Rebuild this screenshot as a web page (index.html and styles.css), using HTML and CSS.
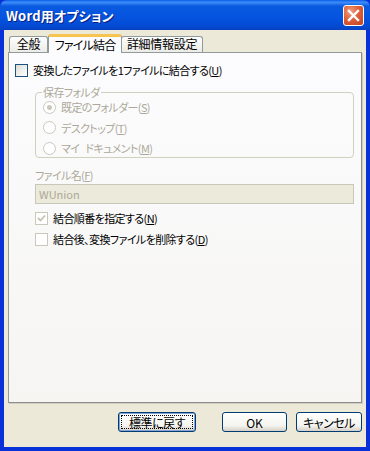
FILE: index.html
```html
<!DOCTYPE html>
<html lang="ja">
<head>
<meta charset="utf-8">
<link rel="stylesheet" href="styles.css">
</head>
<body>
<div class="window">
  <div class="titlebar">
    <span class="title">Word用オプション</span>
    <span class="close"><svg width="13" height="13" viewBox="0 0 13 13"><path d="M2 2 L11 11 M11 2 L2 11" stroke="#fff" stroke-width="2.4" stroke-linecap="square"/></svg></span>
  </div>
  <div class="client">
    <div class="tabs">
      <div class="tab">全般</div>
      <div class="tab active">ファイル結合</div>
      <div class="tab">詳細情報設定</div>
    </div>
    <div class="panel">
      <label class="check main"><span class="box"></span><span>変換したファイルを1ファイルに結合する(<u>U</u>)</span></label>
      <div class="sub">
        <fieldset class="group">
          <legend>保存フォルダ</legend>
          <div class="radio"><span class="dot on"></span><span>既定のフォルダー(<u>S</u>)</span></div>
          <div class="radio"><span class="dot"></span><span>デスクトップ(<u>T</u>)</span></div>
          <div class="radio"><span class="dot"></span><span class="spaced">マイ ドキュメント(<u>M</u>)</span></div>
        </fieldset>
        <div class="fieldlabel">ファイル名(<u>F</u>)</div>
        <div class="textbox">WUnion</div>
        <div class="check dis"><span class="box"><svg width="9" height="9" viewBox="0 0 9 9"><path d="M1 4 L3.5 6.5 L8 1.5" fill="none" stroke="#c7c3b1" stroke-width="1.8"/></svg></span><span>結合順番を指定する(<u>N</u>)</span></div>
        <div class="check dis"><span class="box"></span><span>結合後、変換ファイルを削除する(<u>D</u>)</span></div>
      </div>
    </div>
    <div class="buttons">
      <button class="btn default">標準に戻す</button>
      <button class="btn ok">OK</button>
      <button class="btn cancel">キャンセル</button>
    </div>
  </div>
</div>
</body>
</html>
```
FILE: styles.css
```css
html, body { margin: 0; padding: 0; }
body {
  width: 370px; height: 451px; overflow: hidden;
  font-family: "Noto Sans CJK JP", "Noto Sans", sans-serif;
  font-size: 11px;
  letter-spacing: -0.6px;
  font-feature-settings: "palt";
  white-space: nowrap;
}
.window {
  width: 370px; height: 451px; box-sizing: border-box;
  display: flex; flex-direction: column;
  background: #0831d9;
}
.titlebar {
  height: 30px; flex: none;
  background: linear-gradient(#0a5fea 0%, #3d8cf7 8%, #0a5ae0 20%, #0553e0 60%, #0349d0 90%, #0a40c0 100%);
  border-radius: 7px 7px 0 0;
  display: flex; align-items: center; justify-content: space-between;
  padding: 0 6px 0 6px;
}
.title {
  color: #fff; font-weight: bold; font-size: 13px;
  text-shadow: 1px 1px 0 #0a1e80;
  letter-spacing: 0.2px;
}
.close {
  width: 21px; height: 21px; box-sizing: border-box;
  border: 1px solid #fff; border-radius: 3px;
  background: radial-gradient(circle at 35% 30%, #f0a080 0%, #e0603c 45%, #c2401d 100%);
  display: flex; align-items: center; justify-content: center;
}
.client {
  flex: 1; margin: 0 4px 4px 4px;
  background: #ece9d8;
  display: flex; flex-direction: column;
  padding: 5px 4px 0 4px;
}
.tabs { display: flex; align-items: flex-end; height: 17px; padding-left: 1px; }
.tab {
  height: 16px; box-sizing: border-box; line-height: 14px;
  border: 1px solid #919b9c; border-bottom: none;
  border-radius: 3px 3px 0 0;
  background: linear-gradient(#fefefe, #ecebe6);
  padding: 0; margin-right: 1px; text-align: center;
  color: #000; font-size: 12px; letter-spacing: -0.3px;
}
.tab:first-child { width: 39px; }
.tab.active {
  height: 19px; margin-bottom: -1px; position: relative; z-index: 1;
  background: #fcfcfe; border-top: 3px solid #f7c450; line-height: 15px;
  width: 74px; margin-left: -1px; margin-right: -1px; letter-spacing: -0.8px;
}
.tab:last-child { width: 82px; }
.panel {
  height: 351px; box-sizing: border-box;
  border: 1px solid #919b9c; border-right-color: #8d8d8d; border-bottom-color: #8d8d8d;
  background: linear-gradient(#fcfcfe 0%, #f6f5f2 100%);
  box-shadow: 1px 1px 0 #d0cec3;
  padding: 10px 0 0 6px;
}
.check { display: flex; align-items: center; height: 14px; gap: 5px; }
.box {
  width: 13px; height: 13px; box-sizing: border-box; flex: none;
  border: 1px solid #1c5180; background: linear-gradient(135deg, #dcdcd7, #fff);
  display: flex; align-items: center; justify-content: center;
}
.sub { padding-left: 20px; padding-right: 7px; }
.group {
  margin: 9px 0 0 0; padding: 0 0 4px 7px;
  border: 1px solid #d0d0bf; border-radius: 4px; height: 72px; box-sizing: border-box;
  color: #aca899;
}
.group legend { padding: 0 1px; margin-left: -1px; line-height: 12px; }
.radio { display: flex; align-items: center; gap: 5px; height: 20.5px; }
.radio:first-of-type { margin-top: -1px; }
.spaced { word-spacing: 4px; }
.dot {
  width: 13px; height: 13px; box-sizing: border-box; border-radius: 50%; flex: none;
  border: 1px solid #cac8bb; background: #fff;
  display: flex; align-items: center; justify-content: center;
}
.dot.on::after { content: ""; width: 5px; height: 5px; border-radius: 50%; background: #cac8bb; }
.fieldlabel { color: #aca899; margin-top: 9px; height: 16px; line-height: 16px; }
.textbox {
  height: 20px; box-sizing: border-box; margin-top: 1px;
  border: 1px solid #c9c7ba; background: #ebeadb; color: #aca899;
  padding: 0 3px; line-height: 18px; letter-spacing: 0;
}
.check.dis { color: #000; margin-top: 7px; }
.check.dis + .check.dis { margin-top: 7px; }
.check.dis .box { border-color: #cac8bb; background: #fff; }
.buttons {
  display: flex; justify-content: flex-end; padding-top: 9px;
}
.btn {
  height: 20px; box-sizing: border-box; padding: 0;
  font: inherit; font-size: 12px; letter-spacing: -0.5px; font-feature-settings: "palt"; color: #000;
  border: 1px solid #003c74; border-radius: 3px;
  background: linear-gradient(#fff 0%, #f4f4f0 70%, #d6d0c5 100%);
}
.btn.default { width: 78px; margin-right: 26px; outline: 1px dotted #000; outline-offset: -4px; box-shadow: inset 0 0 0 1px #86a5d6; }
.btn.ok { width: 65px; margin-right: 9px; letter-spacing: 0; }
.btn.cancel { width: 66px; }
u { text-decoration: underline; }
```
